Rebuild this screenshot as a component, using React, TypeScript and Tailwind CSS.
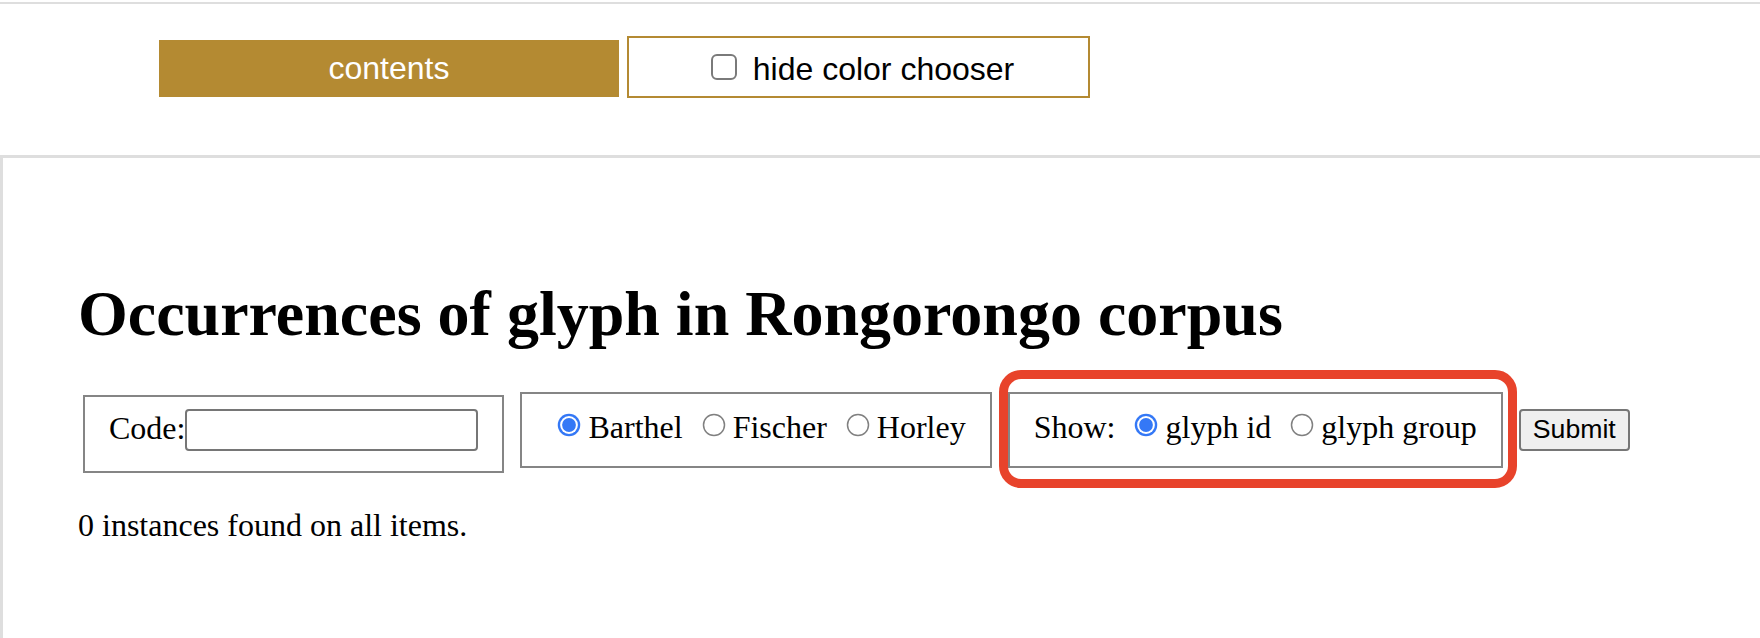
import React from "react";

const RadioMark = ({ checked = false }: { checked?: boolean }) => (
  <svg
    width="26"
    height="26"
    viewBox="0 0 26 26"
    className="ml-[10px] mr-[6px] mt-[6px] inline-block align-baseline"
  >
    {checked ? (
      <>
        <circle cx="13" cy="13" r="11.25" fill="#3478f6" />
        <circle cx="13" cy="13" r="8.9" fill="#fff" />
        <circle cx="13" cy="13" r="6.9" fill="#3478f6" />
      </>
    ) : (
      <circle cx="13" cy="13" r="10.5" fill="#fff" stroke="#808080" strokeWidth="1.5" />
    )}
  </svg>
);

export default function App() {
  return (
    <div className="flex min-h-screen flex-col bg-white font-['Liberation_Serif',serif] text-black">
      <div className="mt-[2px] h-[2px] bg-[#dedede]" />

      <header className="flex h-[151px] items-start pl-[159px] pt-[32px] font-['Liberation_Sans',Arial,sans-serif] text-[32px] leading-[normal]">
        <a className="mt-[4px] flex h-[57px] w-[460px] items-center justify-center bg-[#b48a32] text-white">
          contents
        </a>
        <label className="ml-[8px] flex h-[62px] w-[463px] items-center justify-center gap-[16px] border-2 border-[#b48a32] pl-[8px]">
          <svg width="26" height="26" viewBox="0 0 26 26" className="shrink-0">
            <rect x="1" y="1" width="24" height="24" rx="5" fill="#fff" stroke="#7a7a7a" strokeWidth="2" />
          </svg>
          <span className="pt-[4px]">hide color chooser</span>
        </label>
      </header>

      <main className="flex-1 border-l-[3px] border-t-[3px] border-[#dedede] pl-[75px] pt-[119px] text-[32px] leading-[normal]">
        <h1 className="text-[64px] font-bold leading-[74px]">
          Occurrences of glyph in Rongorongo corpus
        </h1>

        <form className="mt-[41px] flex items-baseline gap-[16px]">
          <div className="ml-[5px] border-2 border-[#858585] px-[24px] pb-[20px] pt-[12px]">
            Code:
            <input
              type="text"
              className="inline-block h-[42px] w-[293px] rounded-[4px] border-2 border-[#767676] bg-white px-[4px] align-baseline font-['Liberation_Sans',Arial,sans-serif] text-[26.67px]"
            />
          </div>

          <div className="border-2 border-[#858585] px-[24px] pb-[20px] pt-[12px] whitespace-nowrap">
            <RadioMark checked />
            Barthel <RadioMark />
            Fischer <RadioMark />
            Horley
          </div>

          <div className="relative border-2 border-[#858585] px-[24px] pb-[20px] pt-[12px] whitespace-nowrap">
            Show: <RadioMark checked />
            glyph id <RadioMark />
            glyph group
            <div className="pointer-events-none absolute -bottom-[22px] -left-[11px] -right-[16px] -top-[24px] rounded-[22px] border-[9px] border-[#e8432b]" />
          </div>

          <button
            type="button"
            className="h-[42px] rounded-[4px] border-2 border-[#767676] bg-[#efefef] px-[12px] font-['Liberation_Sans',Arial,sans-serif] text-[26.67px] leading-[normal]"
          >
            Submit
          </button>
        </form>

        <p className="mt-[34px]">0 instances found on all items.</p>
      </main>
    </div>
  );
}
